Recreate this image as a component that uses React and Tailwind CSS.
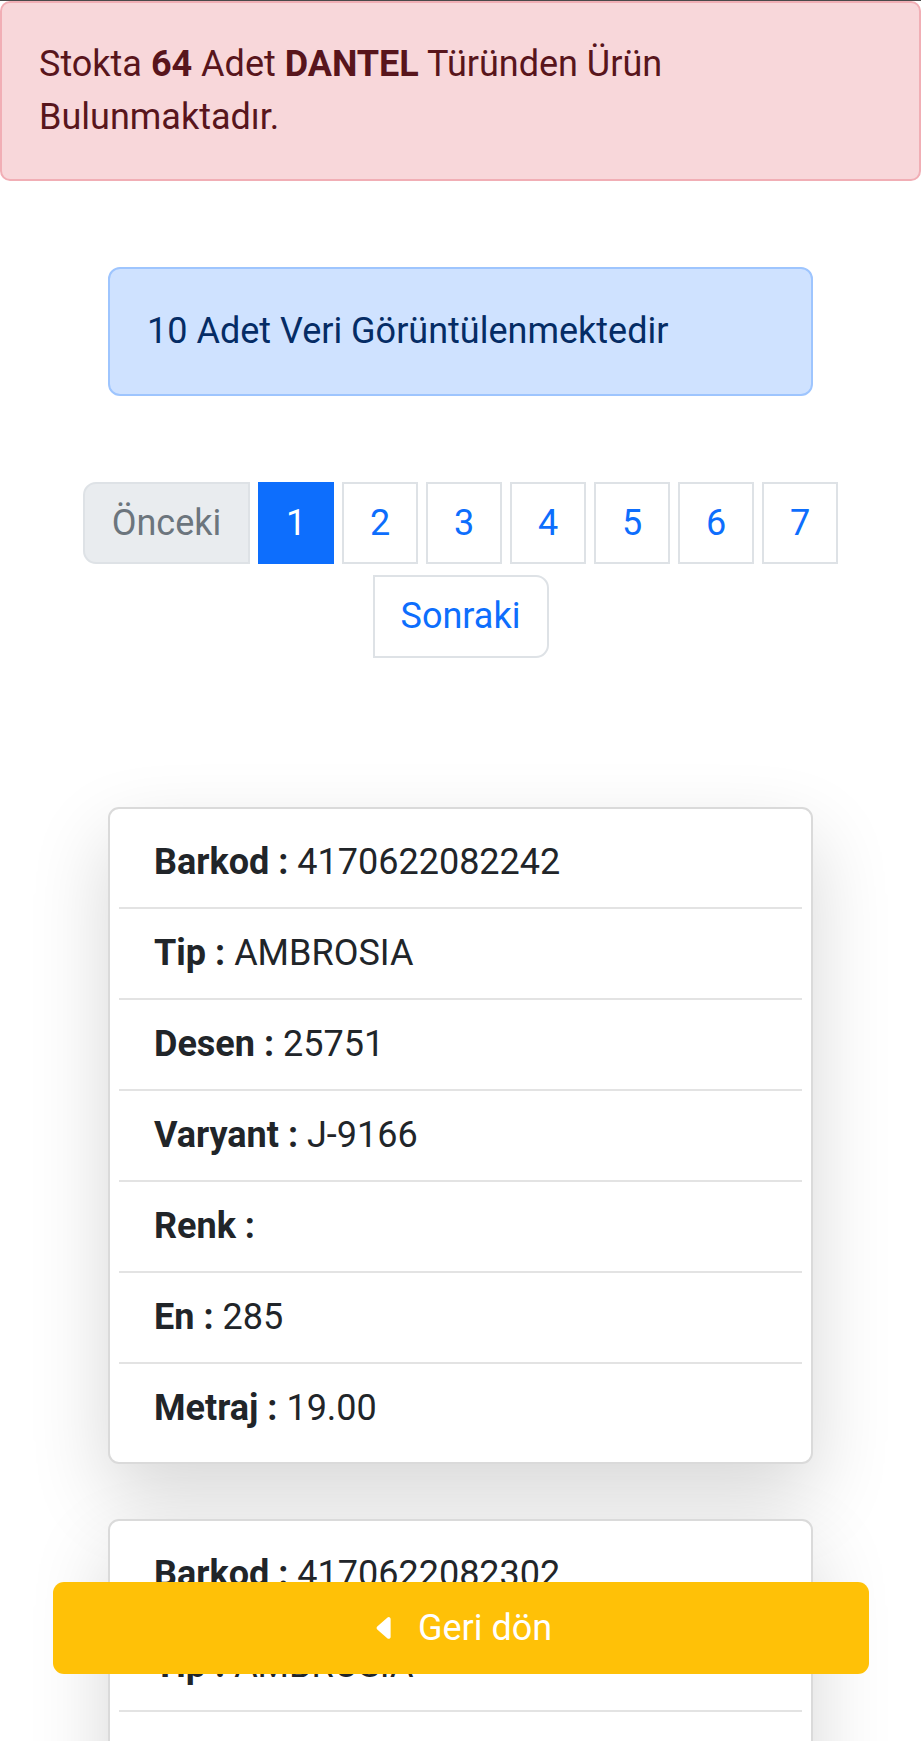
import React from "react";

const card1 = [
  ["Barkod", "4170622082242"],
  ["Tip", "AMBROSIA"],
  ["Desen", "25751"],
  ["Varyant", "J-9166"],
  ["Renk", ""],
  ["En", "285"],
  ["Metraj", "19.00"],
];

const card2 = [
  ["Barkod", "4170622082302"],
  ["Tip", "AMBROSIA"],
  ["Desen", "25751"],
  ["Varyant", "J-9166"],
  ["Renk", ""],
  ["En", "285"],
  ["Metraj", "19.00"],
];

function Card({ rows }) {
  return (
    <div className="mx-[108px] rounded-[11px] border-2 border-[#dadada] bg-white p-[9px] shadow-[0_32px_80px_rgba(0,0,0,0.16)]">
      {rows.map(([k, v], i) => (
        <div
          key={k}
          className={
            "px-[35px] py-[18px] text-[36px] leading-[53px] text-[#212529] " +
            (i < rows.length - 1 ? "border-b-2 border-[#e3e3e3]" : "")
          }
        >
          <span className="font-bold">{k} :</span> {v}
        </div>
      ))}
    </div>
  );
}

export default function App() {
  const pages = ["1", "2", "3", "4", "5", "6", "7"];
  return (
    <div
      className="min-h-screen bg-white pb-[200px]"
      style={{ fontFamily: "Roboto, 'Noto Sans', sans-serif" }}
    >
      <div className="h-px bg-[#4a4a4a]" />
      <div className="rounded-[10px] border-2 border-[#f1aeb5] bg-[#f8d7da] px-[37px] py-[35px] text-[36px] leading-[53px] text-[#58151c]">
        Stokta <b>64</b> Adet <b>DANTEL</b> Türünden Ürün Bulunmaktadır.
      </div>

      <div className="mx-[108px] mt-[86px] rounded-[12px] border-2 border-[#9ec5fe] bg-[#cfe2ff] px-[37px] py-[36px] text-[36px] leading-[53px] text-[#052c65]">
        10 Adet Veri Görüntülenmektedir
      </div>

      <div className="mt-[86px] flex flex-wrap justify-center gap-x-[8px] gap-y-[11px] text-[36px] leading-[53px]">
        <div className="flex h-[82px] w-[167px] items-center justify-center rounded-l-[13px] border-2 border-[#dee2e6] bg-[#e9ecef] text-[#6c757d]">
          Önceki
        </div>
        {pages.map((p) =>
          p === "1" ? (
            <div
              key={p}
              className="flex h-[82px] w-[76px] items-center justify-center border-2 border-[#0d6efd] bg-[#0d6efd] text-white"
            >
              {p}
            </div>
          ) : (
            <div
              key={p}
              className="flex h-[82px] w-[76px] items-center justify-center border-2 border-[#dee2e6] bg-white text-[#0d6efd]"
            >
              {p}
            </div>
          )
        )}
        <div className="flex h-[83px] w-[176px] items-center justify-center rounded-r-[13px] border-2 border-[#dee2e6] bg-white text-[#0d6efd]">
          Sonraki
        </div>
      </div>

      <div className="mt-[149px]">
        <Card rows={card1} />
      </div>
      <div className="mt-[55px]">
        <Card rows={card2} />
      </div>

      <button className="fixed bottom-[67px] left-[53px] right-[52px] flex h-[92px] items-center justify-center gap-[18px] rounded-[11px] bg-[#ffc107] text-[36px] leading-[53px] text-white">
        <svg width="30" height="30" viewBox="0 0 16 16" fill="currentColor">
          <path d="m3.86 8.753 5.482 4.796c.646.566 1.658.106 1.658-.753V3.204a1 1 0 0 0-1.659-.753l-5.48 4.796a1 1 0 0 0 0 1.506z" />
        </svg>
        <span>Geri dön</span>
      </button>
    </div>
  );
}
